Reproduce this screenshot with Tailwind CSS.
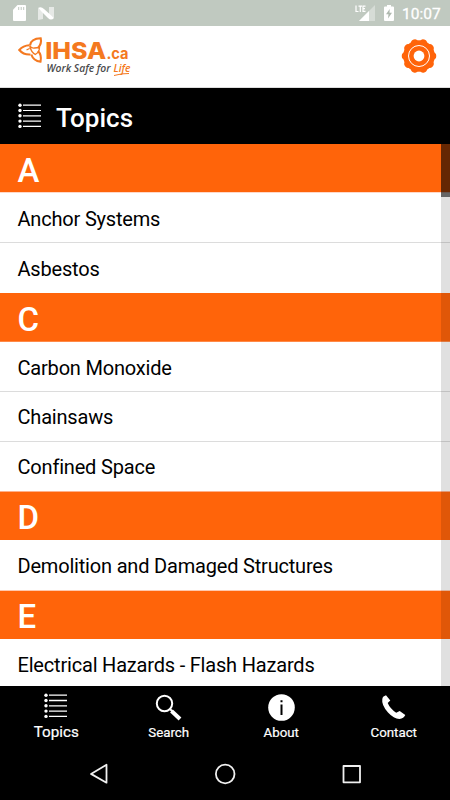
<!DOCTYPE html>
<html lang="en">
<head>
<meta charset="utf-8">
<title>IHSA Topics</title>
<script src="https://cdn.jsdelivr.net/npm/@tailwindcss/browser@4"></script>
</head>
<body class="w-[450px] h-[800px] overflow-hidden flex flex-col bg-black font-[Roboto,sans-serif]">
<div class="h-[26px] shrink-0 bg-[#c0c9c0] flex items-center text-white">
  <svg class="ml-[13px] w-[13px] h-[16px]" viewBox="0 0 13 16"><path fill="#fff" d="M4.500 0H12q1 0 1 1v14q0 1-1 1H1q-1 0-1-1V4.700z"/><path stroke="#c0c9c0" stroke-width="1" d="M5.700 2v3M8.200 2v3M10.700 2v3"/></svg>
  <svg class="ml-[12px] w-[16px] h-[13px]" viewBox="0 0 16 13"><path fill="#fff" fill-opacity=".6" d="M0 1.500 5 5v7L0 13zM11 0h5v11l-5-3z"/><path fill="#fff" d="M0 1q3-2 6 1l10 9q-3 3-6 0z"/></svg>
  <svg class="ml-[301px] w-[20px] h-[17px]" viewBox="0 0 20 17"><path fill="#fff" fill-opacity=".35" d="M20 0v16H4z"/><path fill="#fff" d="M14 6v10H4z"/><path fill="none" stroke="#fff" stroke-width="1.200" d="M1 .500v6h2.500M3.500 1.100h3.500M5.300 1.100V7M10.500 1.100H8v5.300h2.500M8 3.700h2"/></svg>
  <svg class="ml-[9px] w-[10px] h-[16px]" viewBox="0 0 10 16"><path fill="#fff" d="M3 0h4v1.500h2q1 0 1 1V15q0 1-1 1H1q-1 0-1-1V2.500q0-1 1-1h2z"/><path fill="#aeb8ae" d="M5.700 4 2 9.300h2.500L4 13.500l4-5.700H5.500z"/></svg>
  <div class="ml-[8px] mt-[2px] text-[15.500px] leading-[18px] font-normal [-webkit-text-stroke:0.3px_white] whitespace-nowrap">10:07</div>
</div>
<header class="h-[62px] shrink-0 bg-white flex justify-between border-b border-[#ddd]">
  <svg class="w-[140px] h-[60px]" viewBox="0 26 140 60" role="img">
    <g fill="none" stroke="#f47920" stroke-width="2.100" stroke-linejoin="miter">
      <path d="M30 45.500Q31 38.500 40.700 38.300Q42 43.500 38 48"/>
      <path d="M29.500 45.300Q23 45.500 19.300 50Q23.500 55 30.500 54.500"/>
      <path d="M38 51Q42 55 40.500 61.700Q33.500 61 31.300 54.500"/>
      <path stroke-width="1.300" d="M29.700 46Q32 48.500 34.500 48T39.500 47.500Q39.500 52 35.300 54.500Q31 52 29.700 46M26.500 50 29.500 48.500"/>
    </g>
    <text x="45.200" y="59.300" textLength="61" lengthAdjust="spacingAndGlyphs" fill="#f47920" font-family="Inter" font-weight="800" font-size="23.500">IHSA</text>
    <text x="106.500" y="59.300" textLength="22" lengthAdjust="spacingAndGlyphs" fill="#f47920" font-family="Inter" font-weight="700" font-size="15.500">.ca</text>
    <text x="46.500" y="72.300" textLength="64" lengthAdjust="spacingAndGlyphs" fill="#4b4b4d" font-family="Open Sans" font-style="italic" font-weight="600" font-size="10">Work Safe for</text>
    <text x="113.500" y="72.300" textLength="17" lengthAdjust="spacingAndGlyphs" fill="#f47920" font-family="Open Sans" font-style="italic" font-weight="600" font-size="10">Life</text>
    <path d="M114 75.500Q122 73.300 129 73.500" fill="none" stroke="#f47920"/>
  </svg>
  <svg class="mt-[12px] mr-[13px] w-[36px] h-[36px]" viewBox="-18 -18 36 36">
    <g fill="#ff640a"><circle r="15.800"/>
      <g stroke="#ff640a" stroke-width="7.500" stroke-linecap="round"><path d="M0-13.500v27" transform="rotate(18)"/><path d="M0-13.500v27" transform="rotate(54)"/><path d="M0-13.500v27" transform="rotate(90)"/><path d="M0-13.500v27" transform="rotate(126)"/><path d="M0-13.500v27" transform="rotate(162)"/></g>
    </g>
    <circle r="10.500" fill="none" stroke="#fff" stroke-width="1"/><circle r="5.400" fill="#fff"/>
  </svg>
</header>
<div class="h-[56px] shrink-0 bg-black flex items-center">
  <svg class="ml-[18px] w-[24px] h-[26px]" viewBox="0 0 24 26"><path stroke="#fff" stroke-width="1.200" d="M5 2.200h18M5 7.500h18M5 12.800h18M5 18.100h18M5 23.400h18"/><g fill="#fff"><circle cx="2" cy="2.200" r="1.700"/><circle cx="2" cy="7.500" r="1.700"/><circle cx="2" cy="12.800" r="1.700"/><circle cx="2" cy="18.100" r="1.700"/><circle cx="2" cy="23.400" r="1.700"/></g></svg>
  <h1 class="ml-[14px] mt-[3px] text-[26px] leading-[30px] font-medium text-white">Topics</h1>
</div>
<main class="relative h-[542px] shrink-0 bg-white overflow-hidden text-[20px] tracking-[-0.19px] text-black">
  <h2 class="h-[49px] pl-[17.500px] pt-[3px] bg-[#ff640a] border-b border-[#ffd8c8] text-white text-[33px] leading-[48px] font-medium">A</h2>
  <div class="h-[50px] pl-[17.500px] pt-[2px] leading-[49px] border-b border-[#dcdcdc]">Anchor Systems</div>
  <div class="h-[50px] pl-[17.500px] pt-[2px] leading-[49px]">Asbestos</div>
  <h2 class="h-[49px] pl-[17.500px] pt-[3px] bg-[#ff640a] border-b border-[#ff8a48] text-white text-[33px] leading-[48px] font-medium">C</h2>
  <div class="h-[50px] pl-[17.500px] pt-[2px] leading-[49px] border-b border-[#dcdcdc]">Carbon Monoxide</div>
  <div class="h-[50px] pl-[17.500px] pt-[1px] leading-[49px] border-b border-[#dcdcdc]">Chainsaws</div>
  <div class="h-[49px] pl-[17.500px] pt-[1px] leading-[49px]">Confined Space</div>
  <h2 class="h-[49px] pl-[17.500px] pt-[2px] bg-[#ff640a] border-t border-[#ffb08a] text-white text-[33px] leading-[48px] font-medium">D</h2>
  <div class="h-[50px] pl-[17.500px] pt-[2px] leading-[49px]">Demolition and Damaged Structures</div>
  <h2 class="h-[49px] pl-[17.500px] pt-[2px] bg-[#ff640a] border-t border-[#ffc8ae] text-white text-[33px] leading-[48px] font-medium">E</h2>
  <div class="h-[50px] pl-[17.500px] pt-[2px] leading-[49px]">Electrical Hazards - Flash Hazards</div>
  <div class="absolute right-0 top-0 w-[9px] h-full bg-black/12"><div class="h-[53px] bg-black/55"></div></div>
</main>
<nav class="h-[56px] shrink-0 grid grid-cols-4 bg-black text-white text-center font-normal [-webkit-text-stroke:0.2px_white] text-[13.300px] leading-[16px]">
  <div class="flex flex-col items-center text-[15.200px]">
    <svg class="mt-[7px] w-[24px] h-[26px]" viewBox="0 0 24 26"><path stroke="#fff" stroke-width="1.300" d="M5 2.200h18M5 7.500h18M5 12.800h18M5 18.100h18M5 23.400h18"/><g fill="#fff"><circle cx="2" cy="2.200" r="1.700"/><circle cx="2" cy="7.500" r="1.700"/><circle cx="2" cy="12.800" r="1.700"/><circle cx="2" cy="18.100" r="1.700"/><circle cx="2" cy="23.400" r="1.700"/></g></svg>
    <span class="mt-[5px]">Topics</span>
  </div>
  <div class="flex flex-col items-center">
    <svg class="mt-[8px] w-[27px] h-[27px]" viewBox="0 0 27 27"><circle cx="9.500" cy="9.500" r="7.700" fill="none" stroke="#fff" stroke-width="2"/><path stroke="#fff" stroke-width="2" d="m14.500 14.500 3 3"/><path stroke="#fff" stroke-width="4" d="m16.500 17 8.500 8"/></svg>
    <span class="mt-[4px]">Search</span>
  </div>
  <div class="flex flex-col items-center">
    <svg class="mt-[8px] w-[27px] h-[27px]" viewBox="0 0 27 27"><circle cx="13.500" cy="13.500" r="13.300" fill="#fff"/><path fill="#000" d="M12.500 6.300h2v2h-2zM12.500 10.500h2v10.500h-2z"/></svg>
    <span class="mt-[4px]">About</span>
  </div>
  <div class="flex flex-col items-center">
    <svg class="mt-[8px] w-[27px] h-[27px]" viewBox="0 0 27 27"><path fill="#fff" d="M3.500 2.500 6 1.200l4.300 5.200-2.600 2.500q2.200 5.400 8.500 9.800l3.500-1.700 5.600 4q-1.500 3.500-5.800 3.900Q14 25 8 18.500 1.300 11 2.300 5q.3-1.700 1.200-2.500z"/></svg>
    <span class="mt-[4px]">Contact</span>
  </div>
</nav>
<div class="h-[58px] shrink-0 bg-black">
  <svg class="w-[450px] h-[58px]" viewBox="0 742 450 58" fill="none" stroke="#f0f0f0" stroke-width="1.800" stroke-linejoin="round"><path d="M106.500 764.700v18L91 773.900z"/><circle cx="225.200" cy="774" r="9.300"/><rect x="343.500" y="766" width="16.500" height="16.300"/></svg>
</div>
</body>
</html>
